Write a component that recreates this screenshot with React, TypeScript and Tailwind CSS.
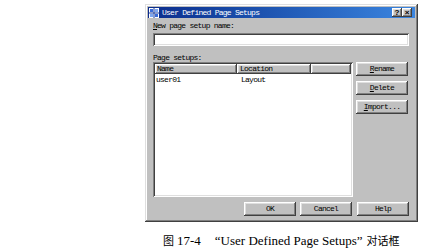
import React from 'react';

const raised =
  'shadow-[inset_-1px_-1px_#404040,inset_1px_1px_#ffffff,inset_-2px_-2px_#808080,inset_2px_2px_#dfdfdf]';
const sunken =
  'shadow-[inset_1px_1px_#808080,inset_-1px_-1px_#ffffff,inset_2px_2px_#404040,inset_-2px_-2px_#dfdfdf]';
const mono = "font-['Liberation_Mono',monospace] text-[8px] tracking-[-0.75px] text-black";

const Btn = ({ children, className = '' }: { children: React.ReactNode; className?: string }) => (
  <div
    className={`w-[52px] h-[14px] bg-[#c0c0c0] ${raised} flex items-center justify-center ${mono} ${className}`}
  >
    {children}
  </div>
);

const TitleIcon = () => (
  <svg width="10" height="10" viewBox="0 0 10 10">
    <rect x="0" y="0" width="10" height="10" fill="#ffffff" />
    <rect x="1" y="1" width="3" height="3" fill="#3a6cd8" />
    <rect x="6" y="1" width="3" height="3" fill="#7fa8f0" />
    <rect x="1" y="6" width="3" height="3" fill="#7fa8f0" />
    <rect x="6" y="6" width="3" height="3" fill="#3a6cd8" />
    <path d="M0 5h10M5 0v10" stroke="#1b3c9c" strokeWidth="1" />
  </svg>
);

export default function App() {
  return (
    <div className="w-[426px] h-[250px] bg-white flex flex-col pt-[4px]">
      <div className="ml-[145px] w-[273px] h-[218px] bg-[#c0c0c0] p-[3px] flex flex-col shadow-[inset_-1px_-1px_#404040,inset_1px_1px_#dfdfdf,inset_-2px_-2px_#808080,inset_2px_2px_#ffffff]">
        {/* Title bar */}
        <div className="h-[11px] flex items-center bg-gradient-to-r from-[#0c2c8c] to-[#3c86e0] pl-[1px] pr-[3px]">
          <TitleIcon />
          <span className="ml-[3px] font-['Liberation_Mono',monospace] text-[8px] tracking-[-0.75px] text-white leading-none">
            User Defined Page Setups
          </span>
          <div className="ml-auto flex">
            <div className={`w-[10px] h-[9px] bg-[#c0c0c0] ${raised} flex items-center justify-center font-['Liberation_Sans',sans-serif] text-[8px] font-bold leading-none text-black`}>
              ?
            </div>
            <div className={`w-[10px] h-[9px] bg-[#c0c0c0] ${raised} flex items-center justify-center font-['Liberation_Sans',sans-serif] text-[8px] font-bold leading-none text-black`}>
              ×
            </div>
          </div>
        </div>

        {/* Body */}
        <div className="flex-1 flex flex-col pl-[5px] pr-[6px]">
          <div className={`mt-[3px] h-[10px] leading-[10px] ${mono}`}>
            <span className="underline">N</span>ew page setup name:
          </div>
          <div className={`mt-[2px] h-[13px] w-[256px] bg-white ${sunken}`} />

          <div className={`mt-[7px] h-[9px] leading-[9px] ${mono}`}>Page setups:</div>

          <div className="flex">
            {/* List */}
            <div className={`w-[200px] h-[135px] bg-white ${sunken} p-[2px] flex flex-col`}>
              <div className="flex h-[10px]">
                <div className={`w-[82px] bg-[#c0c0c0] ${raised} pl-[2px] leading-[10px] ${mono}`}>Name</div>
                <div className={`w-[74px] bg-[#c0c0c0] ${raised} pl-[3px] leading-[10px] ${mono}`}>Location</div>
                <div className={`flex-1 bg-[#c0c0c0] ${raised}`} />
              </div>
              <div className={`flex h-[10px] mt-[1px] leading-[10px] ${mono}`}>
                <div className="w-[82px] pl-[1px]">user01</div>
                <div className="pl-[4px]">Layout</div>
              </div>
            </div>

            {/* Side buttons */}
            <div className="ml-[3px] flex flex-col gap-[5px]">
              <Btn>
                <span className="underline">R</span>ename
              </Btn>
              <Btn>
                <span className="underline">D</span>elete
              </Btn>
              <Btn>
                <span className="underline">I</span>mport...
              </Btn>
            </div>
          </div>

          <div className="mt-[5px] flex justify-end">
            <Btn>OK</Btn>
            <Btn className="ml-[4px]">Cancel</Btn>
            <Btn className="ml-[5px]">Help</Btn>
          </div>
        </div>
      </div>

      {/* Caption */}
      <div className="mt-[11px] ml-[163px] flex items-baseline text-black font-['Liberation_Serif','Noto_Sans_CJK_SC',serif] text-[13px] leading-[14px]">
        <span className="font-['Noto_Sans_CJK_SC',serif] text-[11px]">图</span>
        <span className="ml-[3px]">17-4</span>
        <span className="ml-[14px]">“User Defined Page Setups”</span>
        <span className="ml-[4px] font-['Noto_Sans_CJK_SC',serif] text-[11px]">对话框</span>
      </div>
    </div>
  );
}
